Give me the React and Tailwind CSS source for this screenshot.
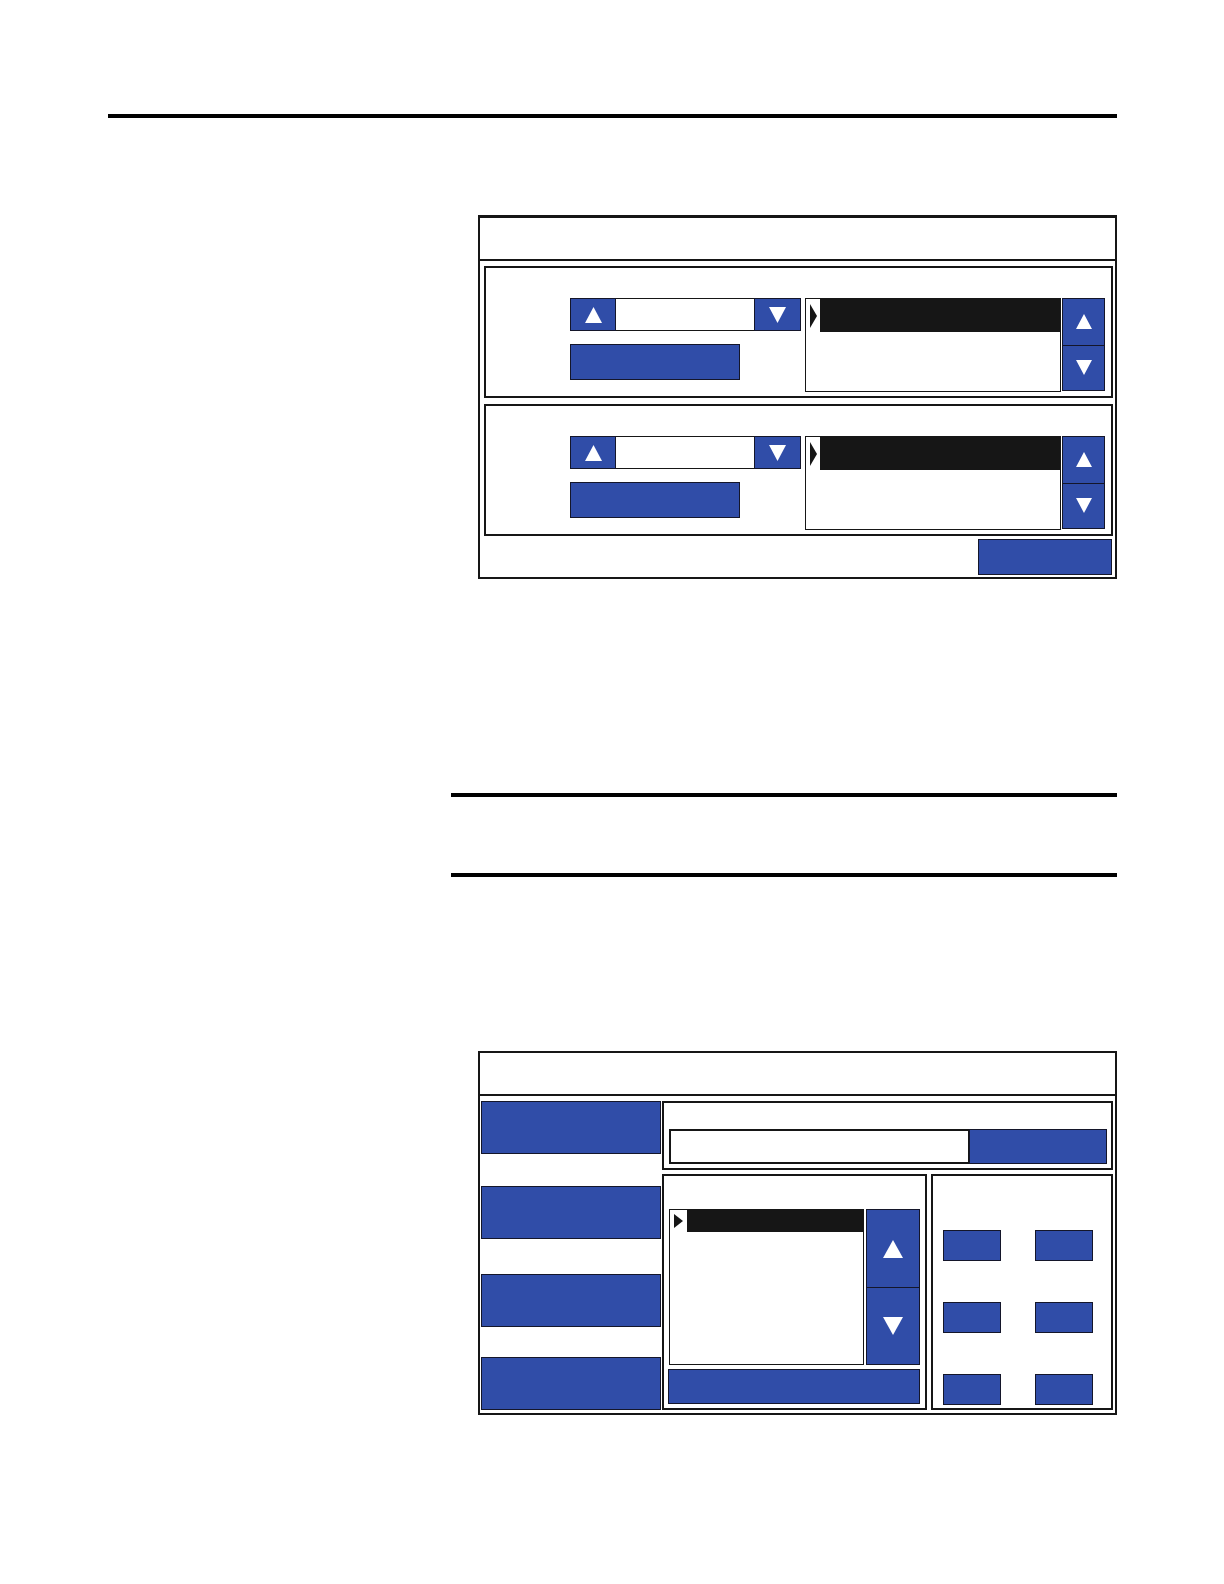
import clsx from "clsx";

const BLUE_BUTTON = "border border-[#14162a] bg-[#304da8] active:bg-[#263f8c]";

function Triangle({ down, className }) {
  return (
    <svg viewBox="0 0 20 18" preserveAspectRatio="none" fill="#fff" className={className} aria-hidden="true">
      <path d={down ? "M0 0H20L10 18Z" : "M10 0L20 18H0Z"} />
    </svg>
  );
}

function Pointer({ className }) {
  return (
    <svg viewBox="0 0 8 16" preserveAspectRatio="none" fill="#161616" className={className} aria-hidden="true">
      <path d="M0 0L8 8L0 16Z" />
    </svg>
  );
}

function BlueButton({ label, className }) {
  return <button type="button" aria-label={label} className={clsx(BLUE_BUTTON, className)} />;
}

function Scroller({ className, iconClass }) {
  return (
    <div className={clsx("grid grid-rows-2 shrink-0", className)}>
      <button type="button" aria-label="Scroll up" className={clsx(BLUE_BUTTON, "flex items-center justify-center border-b-0")}>
        <Triangle className={iconClass} />
      </button>
      <button type="button" aria-label="Scroll down" className={clsx(BLUE_BUTTON, "flex items-center justify-center")}>
        <Triangle down className={iconClass} />
      </button>
    </div>
  );
}

function Screen({ className, headerClass, children }) {
  return (
    <section className={clsx("ml-[370px] border-2 border-[#161616]", className)}>
      <header className={clsx("h-[43px] border-b-2 border-[#161616]", headerClass)} />
      {children}
    </section>
  );
}

function SelectorGroup({ name }) {
  return (
    <div className="flex items-start border-2 border-[#161616] pt-[30px] pr-[6px] pb-1 pl-[84px]">
      <div className="w-[231px] shrink-0">
        <div className="flex h-[33px]">
          <button type="button" aria-label={`${name} previous`} className={clsx(BLUE_BUTTON, "flex w-[46px] items-center justify-center")}>
            <Triangle className="h-4 w-[17px]" />
          </button>
          <input type="text" aria-label={name} className="min-w-0 flex-1 border-y border-[#161616] bg-white px-2 outline-none" />
          <button type="button" aria-label={`${name} next`} className={clsx(BLUE_BUTTON, "flex w-[47px] items-center justify-center")}>
            <Triangle down className="h-4 w-[17px]" />
          </button>
        </div>
        <BlueButton label={`${name} apply`} className="mt-[13px] block h-9 w-[170px]" />
      </div>

      <ul className="ml-1 h-[94px] flex-1 border border-[#161616]">
        <li className="flex h-[33px] items-center">
          <span className="flex w-[14px] shrink-0 justify-center">
            <Pointer className="h-6 w-[7px]" />
          </span>
          <span className="h-full flex-1 bg-[#161616]" />
        </li>
      </ul>
      <Scroller className="ml-px h-[93px] w-[43px]" iconClass="h-[15px] w-4" />
    </div>
  );
}

export default function App() {
  return (
    <main className="min-h-screen bg-white pt-[114px] pr-[107px] pb-24 pl-[108px] font-['Liberation_Sans',sans-serif]">
      <hr className="border-0 border-t-4 border-black" />

      <Screen className="mt-[97px] border-t-3">
        <div className="flex flex-col gap-[6px] pt-[5px] pr-[2px] pl-1">
          <SelectorGroup name="First selection" />
          <SelectorGroup name="Second selection" />
        </div>
        <footer className="flex justify-end pt-[3px] pr-[3px] pb-[2px]">
          <BlueButton label="Close" className="h-9 w-[134px]" />
        </footer>
      </Screen>

      {/* Callout box between the two screens */}
      <aside className="mt-[214px] ml-[343px] h-[84px] border-y-4 border-black" />

      <Screen className="mt-[174px]">
        <div className="flex gap-px pt-[5px] pr-[2px] pb-[3px] pl-px">
          <nav className="grid w-[180px] shrink-0 grid-rows-[85px_88px_83px_53px]">
            <BlueButton label="Menu 1" className="h-[53px]" />
            <BlueButton label="Menu 2" className="h-[53px]" />
            <BlueButton label="Menu 3" className="h-[53px]" />
            <BlueButton label="Menu 4" className="h-[53px]" />
          </nav>

          <div className="flex min-w-0 flex-1 flex-col gap-1">
            <div className="flex border-2 border-[#161616] pt-[26px] pr-1 pb-1 pl-[5px]">
              <input type="text" aria-label="Value" className="h-[35px] min-w-0 flex-1 border-2 border-r border-[#161616] bg-white px-2 outline-none" />
              <BlueButton label="Edit value" className="w-[138px]" />
            </div>

            <div className="flex flex-1 gap-1">
              <div className="flex-1 border-2 border-[#161616] pt-[33px] pr-[5px] pb-1 pl-1">
                <div className="flex gap-[2px] pl-px">
                  <ul className="h-[156px] flex-1 border border-[#161616]">
                    <li className="flex h-[22px] items-center">
                      <span className="flex w-[17px] shrink-0 justify-center">
                        <Pointer className="h-[14px] w-[9px]" />
                      </span>
                      <span className="h-full flex-1 bg-[#161616]" />
                    </li>
                  </ul>
                  <Scroller className="w-[54px]" iconClass="h-[18px] w-5" />
                </div>
                <BlueButton label="Select item" className="mt-1 block h-[35px] w-full" />
              </div>

              <div className="grid w-[182px] grid-cols-[58px_58px] content-start justify-between gap-y-[41px] border-2 border-[#161616] pt-[54px] pr-[18px] pl-[10px]">
                {[1, 2, 3, 4, 5, 6].map((key) => (
                  <BlueButton key={key} label={`Key ${key}`} className="h-[31px]" />
                ))}
              </div>
            </div>
          </div>
        </div>
      </Screen>
    </main>
  );
}
